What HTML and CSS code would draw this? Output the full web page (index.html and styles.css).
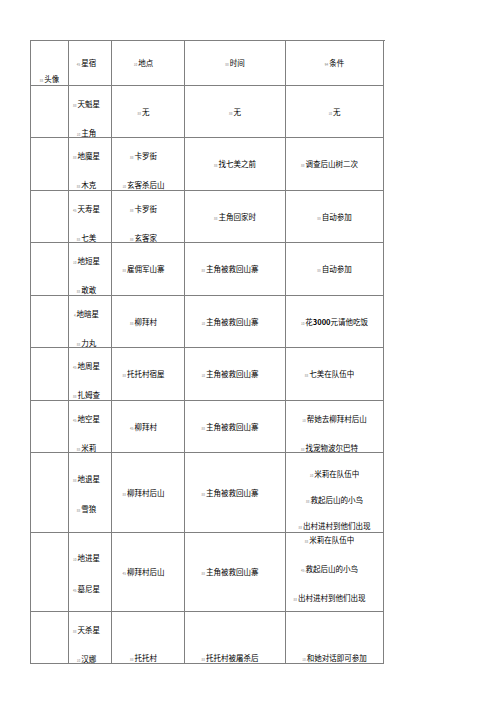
FILE: index.html
```html
<!DOCTYPE html>
<html lang="zh">
<head>
<meta charset="utf-8">
<title>星宿表</title>
<link rel="stylesheet" href="styles.css">
</head>
<body>
<div class="sheet">
  <!-- header -->
  <div class="cell k1 r0 bot2"><p><span class="mk">88</span>头像</p></div>
  <div class="cell k2 r0"><p><span class="mk">45</span>星宿</p></div>
  <div class="cell k3 r0"><p><span class="mk">10</span>地点</p></div>
  <div class="cell k4 r0"><p><span class="mk">88</span>时间</p></div>
  <div class="cell k5 r0"><p><span class="mk">94</span>条件</p></div>

  <!-- row 1 -->
  <div class="cell k1 r1"></div>
  <div class="cell k2 r1 m2"><p><span class="mk">88</span>天魁星</p><p><span class="mk">10</span>主角</p></div>
  <div class="cell k3 r1"><p><span class="mk">88</span>无</p></div>
  <div class="cell k4 r1"><p><span class="mk">88</span>无</p></div>
  <div class="cell k5 r1"><p><span class="mk">10</span>无</p></div>

  <!-- row 2 -->
  <div class="cell k1 r2"></div>
  <div class="cell k2 r2 m2"><p><span class="mk">88</span>地魔星</p><p><span class="mk">88</span>木克</p></div>
  <div class="cell k3 r2 m2"><p><span class="mk">88</span>卡罗街</p><p><span class="mk">10</span>玄客杀后山</p></div>
  <div class="cell k4 r2"><p><span class="mk">88</span>找七美之前</p></div>
  <div class="cell k5 r2"><p class="sl"><span class="mk">88</span>调查后山树二次</p></div>

  <!-- row 3 -->
  <div class="cell k1 r3"></div>
  <div class="cell k2 r3 m2"><p><span class="mk">45</span>天寿星</p><p><span class="mk">88</span>七美</p></div>
  <div class="cell k3 r3 m2"><p><span class="mk">88</span>卡罗街</p><p><span class="mk">88</span>玄客家</p></div>
  <div class="cell k4 r3"><p><span class="mk">88</span>主角回家时</p></div>
  <div class="cell k5 r3"><p><span class="mk">88</span>自动参加</p></div>

  <!-- row 4 -->
  <div class="cell k1 r4"></div>
  <div class="cell k2 r4 m2"><p><span class="mk">10</span>地短星</p><p><span class="mk">88</span>敢敢</p></div>
  <div class="cell k3 r4"><p><span class="mk">88</span>雇佣军山寨</p></div>
  <div class="cell k4 r4"><p class="sl"><span class="mk">88</span>主角被救回山寨</p></div>
  <div class="cell k5 r4"><p><span class="mk">88</span>自动参加</p></div>

  <!-- row 5 -->
  <div class="cell k1 r5"></div>
  <div class="cell k2 r5 m2"><p><span class="mk">4</span>地暗星</p><p><span class="mk">88</span>力丸</p></div>
  <div class="cell k3 r5"><p><span class="mk">88</span>柳拜村</p></div>
  <div class="cell k4 r5"><p class="sl"><span class="mk">10</span>主角被救回山寨</p></div>
  <div class="cell k5 r5"><p><span class="mk">10</span>花<b>3000</b>元请他吃饭</p></div>

  <!-- row 6 -->
  <div class="cell k1 r6"></div>
  <div class="cell k2 r6 m2"><p><span class="mk">45</span>地周星</p><p><span class="mk">88</span>扎姆查</p></div>
  <div class="cell k3 r6"><p><span class="mk">88</span>托托村宿屋</p></div>
  <div class="cell k4 r6"><p class="sl"><span class="mk">10</span>主角被救回山寨</p></div>
  <div class="cell k5 r6"><p class="sl"><span class="mk">88</span>七美在队伍中</p></div>

  <!-- row 7 -->
  <div class="cell k1 r7"></div>
  <div class="cell k2 r7 m2"><p><span class="mk">45</span>地空星</p><p><span class="mk">88</span>米莉</p></div>
  <div class="cell k3 r7"><p><span class="mk">45</span>柳拜村</p></div>
  <div class="cell k4 r7"><p class="sl"><span class="mk">88</span>主角被救回山寨</p></div>
  <div class="cell k5 r7 m2"><p><span class="mk">10</span>帮她去柳拜村后山</p><p class="sl"><span class="mk">88</span>找宠物波尔巴特</p></div>

  <!-- row 8 -->
  <div class="cell k1 r8"></div>
  <div class="cell k2 r8 m2b"><p><span class="mk">88</span>地退星</p><p><span class="mk">88</span>雪狼</p></div>
  <div class="cell k3 r8"><p><span class="mk">88</span>柳拜村后山</p></div>
  <div class="cell k4 r8"><p class="sl"><span class="mk">88</span>主角被救回山寨</p></div>
  <div class="cell k5 r8 m3a"><p><span class="mk">10</span>米莉在队伍中</p><p><span class="mk">88</span>救起后山的小鸟</p><p><span class="mk">88</span>出村进村到他们出现</p></div>

  <!-- row 9 -->
  <div class="cell k1 r9"></div>
  <div class="cell k2 r9 m2c"><p><span class="mk">10</span>地进星</p><p><span class="mk">45</span>墓尼星</p></div>
  <div class="cell k3 r9"><p><span class="mk">45</span>柳拜村后山</p></div>
  <div class="cell k4 r9"><p class="sl"><span class="mk">88</span>主角被救回山寨</p></div>
  <div class="cell k5 r9 m3b"><p class="sl"><span class="mk">88</span>米莉在队伍中</p><p class="sl"><span class="mk">45</span>救起后山的小鸟</p><p class="sl"><span class="mk">88</span>出村进村到他们出现</p></div>

  <!-- row 10 -->
  <div class="cell k1 r10"></div>
  <div class="cell k2 r10 m2"><p><span class="mk">88</span>天杀星</p><p><span class="mk">10</span>汉娜</p></div>
  <div class="cell k3 r10 bot"><p><span class="mk">88</span>托托村</p></div>
  <div class="cell k4 r10 bot"><p class="sl"><span class="mk">88</span>托托村被屠杀后</p></div>
  <div class="cell k5 r10 bot"><p><span class="mk">10</span>和她对话即可参加</p></div>
</div>
</body>
</html>
```

FILE: styles.css
```css
html, body {
  margin: 0;
  padding: 0;
  background: #ffffff;
}

body {
  font-family: "Noto Sans CJK SC", "Noto Sans", "Liberation Sans", sans-serif;
  color: #000000;
}

.sheet {
  margin: 40px 0 0 30px;
  width: 354px;
  display: grid;
  grid-template-columns: 38px 43px 73px 101px 98px;
  grid-template-rows: 45px 52px 53px 52px 53px 52px 53px 52px 80px 79px 52px;
  border-left: 1px solid #808080;
  border-top: 1px solid #808080;
  box-sizing: content-box;
}

.cell {
  box-sizing: border-box;
  border-right: 1px solid #808080;
  border-bottom: 1px solid #808080;
  display: flex;
  flex-direction: column;
  align-items: center;
  justify-content: center;
  overflow: visible;
  font-size: 7.5px;
}

.cell p {
  margin: 0;
  line-height: 14px;
  height: 14px;
  white-space: nowrap;
}

.cell p b {
  font-weight: 700;
}

.k2 { padding-right: 7px; }
.k3 { padding-right: 9px; }

.sl { padding-right: 10px; }

.mk {
  font-size: 3px;
  color: #7a7a7a;
  margin-right: 1px;
  letter-spacing: 0;
}

.m2 {
  justify-content: flex-start;
  padding-top: 10.5px;
  gap: 15.5px;
}

.m2b {
  justify-content: flex-start;
  padding-top: 19px;
  gap: 15.5px;
}

.m2c {
  justify-content: flex-start;
  padding-top: 18px;
  gap: 16.5px;
}

.m3a {
  justify-content: flex-start;
  padding-top: 13.5px;
  gap: 12.3px;
}

.m3b {
  justify-content: flex-start;
  padding-top: 0;
  gap: 15px;
}

.bot {
  justify-content: flex-start;
  padding-top: 38.5px;
}

.bot2 {
  justify-content: flex-start;
  padding-top: 31px;
}
```
